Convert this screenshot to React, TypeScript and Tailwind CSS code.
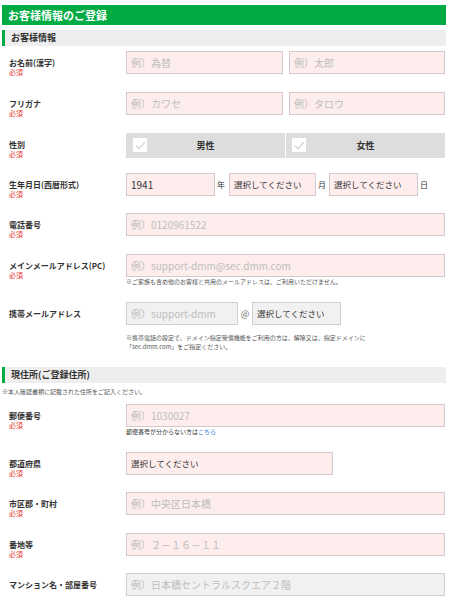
import type { ReactNode } from 'react';

const inputBase =
  'block h-[23px] border border-[#d6c8c8] bg-[#fdeded] px-[4px] text-[10px] text-[#333] outline-none placeholder:text-[#bdbdbd]';
const grayInput =
  'block h-[23px] border border-[#cfcfcf] bg-[#f1f1f1] px-[4px] text-[10px] text-[#333] outline-none placeholder:text-[#bdbdbd]';

function Required() {
  return <div className="text-[7px] leading-[9px] text-[#e8382f]">必須</div>;
}

function Row({
  label,
  required = true,
  pb,
  children,
}: {
  label: string;
  required?: boolean;
  pb: string;
  children: ReactNode;
}) {
  return (
    <div className={`flex items-start ${pb}`}>
      <div className="h-[23px] w-[124px] shrink-0 pl-[7px] pt-[7px]">
        <div className="text-[8px] font-bold leading-[10px] text-[#333]">{label}</div>
        {required && <Required />}
      </div>
      <div className="w-[319px]">{children}</div>
    </div>
  );
}

function Section({ title }: { title: string }) {
  return (
    <div className="flex h-[16px] items-center border-l-[3px] border-[#00ab43] bg-[#eeeeee] pl-[6px] text-[9px] font-bold text-[#333]">
      {title}
    </div>
  );
}

function Select({ w, gray = false, size = 'text-[8.5px]' }: { w: string; gray?: boolean; size?: string }) {
  return (
    <div
      className={`flex h-[23px] items-center px-[4px] ${size} text-[#333] border ${w} ${
        gray ? 'border-[#cfcfcf] bg-[#f1f1f1]' : 'border-[#d6c8c8] bg-[#fdeded]'
      }`}
    >
      選択してください
    </div>
  );
}

function Check() {
  return (
    <div className="flex h-[14px] w-[14px] items-center justify-center bg-white">
      <svg width="11" height="9" viewBox="0 0 11 9">
        <path d="M1 4.5 L4 7.5 L10 1" fill="none" stroke="#d8d8d8" strokeWidth="1.6" />
      </svg>
    </div>
  );
}

export default function App() {
  return (
    <div className="w-[450px] bg-white pt-[5px] font-['Noto_Sans_CJK_JP',sans-serif]">
      <div className="mx-[2px] w-[444px]">
        <div className="flex h-[20px] items-center bg-[#00ab43] pl-[6px] text-[11px] font-bold text-white">
          お客様情報のご登録
        </div>
        <div className="mt-[5px]">
          <Section title="お客様情報" />
        </div>

        <div className="pt-[5px]">
          <Row label="お名前(漢字)" pb="pb-[18px]">
            <div className="flex gap-[6px]">
              <input className={`${inputBase} w-[157px]`} placeholder="例）為替" />
              <input className={`${inputBase} w-[156px]`} placeholder="例）太郎" />
            </div>
          </Row>

          <Row label="フリガナ" pb="pb-[18px]">
            <div className="flex gap-[6px]">
              <input className={`${inputBase} w-[157px]`} placeholder="例）カワセ" />
              <input className={`${inputBase} w-[156px]`} placeholder="例）タロウ" />
            </div>
          </Row>

          <Row label="性別" pb="pb-[15px]">
            <div className="flex h-[25px] w-[319px] bg-[#dddddd] text-[9px] font-bold text-[#333]">
              <div className="relative flex flex-1 items-center justify-center border-r border-white">
                <div className="absolute left-[7px] top-[5px]">
                  <Check />
                </div>
                男性
              </div>
              <div className="relative flex flex-1 items-center justify-center">
                <div className="absolute left-[6px] top-[5px]">
                  <Check />
                </div>
                女性
              </div>
            </div>
          </Row>

          <Row label="生年月日(西暦形式)" pb="pb-[17px]">
            <div className="flex h-[23px] items-center text-[8px] text-[#333]">
              <input className={`${inputBase} w-[89px]`} defaultValue="1941" />
              <span className="ml-[2px] w-[12px]">年</span>
              <Select w="w-[87px]" />
              <span className="ml-[2px] w-[11px]">月</span>
              <Select w="w-[89px]" />
              <span className="ml-[2px]">日</span>
            </div>
          </Row>

          <Row label="電話番号" pb="pb-[18px]">
            <input className={`${inputBase} w-[319px]`} placeholder="例）0120961522" />
          </Row>

          <Row label="メインメールアドレス(PC)" pb="pb-[16px]">
            <input className={`${inputBase} w-[319px]`} placeholder="例）support-dmm@sec.dmm.com" />
            <div className="text-[6px] leading-[9px] text-[#555]">
              ※ご家族も含め他のお客様と共用のメールアドレスは、ご利用いただけません。
            </div>
          </Row>

          <Row label="携帯メールアドレス" required={false} pb="pb-[16px]">
            <div className="flex h-[23px] items-center">
              <input className={`${grayInput} w-[112px]`} placeholder="例）support-dmm" />
              <span className="w-[14px] text-center text-[9px] text-[#666]">@</span>
              <Select w="w-[89px]" gray />
            </div>
            <div className="mt-[8px] text-[6px] leading-[9px] text-[#555]">
              ※携帯電話の設定で、ドメイン指定受信機能をご利用の方は、解除又は、指定ドメインに
              <br />
              「sec.dmm.com」をご指定ください。
            </div>
          </Row>
        </div>

        <Section title="現住所(ご登録住所)" />
        <div className="mt-[5px] text-[6px] leading-[8px] text-[#555]">
          ※本人確認書類に記載された住所をご記入ください。
        </div>

        <div className="pt-[8px]">
          <Row label="郵便番号" pb="pb-[16px]">
            <input className={`${inputBase} w-[319px]`} placeholder="例）1030027" />
            <div className="text-[6px] leading-[9px] text-[#333]">
              郵便番号が分からない方は<span className="text-[#2a7ad5]">こちら</span>
            </div>
          </Row>

          <Row label="都道府県" pb="pb-[17px]">
            <Select w="w-[207px]" />
          </Row>

          <Row label="市区郡・町村" pb="pb-[18px]">
            <input className={`${inputBase} w-[319px]`} placeholder="例）中央区日本橋" />
          </Row>

          <Row label="番地等" pb="pb-[17px]">
            <input className={`${inputBase} w-[319px]`} placeholder="例）２－１６－１１" />
          </Row>

          <Row label="マンション名・部屋番号" required={false} pb="pb-[5px]">
            <input className={`${grayInput} w-[319px]`} placeholder="例）日本橋セントラルスクエア２階" />
          </Row>
        </div>
      </div>
    </div>
  );
}
